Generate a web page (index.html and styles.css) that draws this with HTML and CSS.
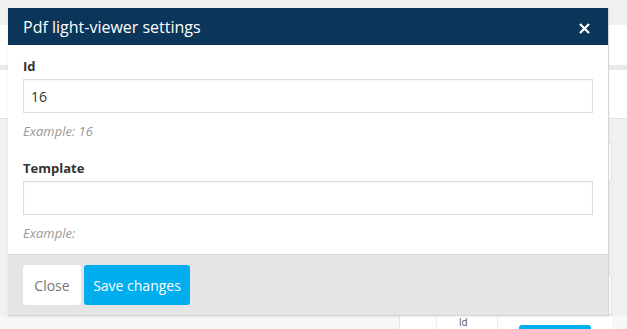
FILE: index.html
```html
<!DOCTYPE html>
<html lang="en">
<head>
  <meta charset="UTF-8">
  <meta name="viewport" content="width=device-width, initial-scale=1.0">
  <title>Pdf light-viewer settings</title>
  <link rel="stylesheet" href="styles.css">
</head>
<body>
  <!-- page behind the dialog -->
  <div class="page">
    <div class="page-top"></div>
    <div class="page-row"></div>
    <div class="page-divider"></div>
    <div class="page-row page-row-tall"></div>
    <div class="page-panel">
      <div class="panel-box panel-box-a"></div>
      <div class="panel-box panel-box-b"></div>
    </div>
    <div class="page-bottom">
      <div class="table-strip">
        <div class="cell cell-a"></div>
        <div class="cell cell-b">ld</div>
        <div class="cell cell-c"><span class="blue-btn"></span></div>
      </div>
    </div>
  </div>

  <!-- settings dialog -->
  <div class="modal">
    <div class="modal-header">
      <h4 class="modal-title">Pdf light-viewer settings</h4>
      <button class="modal-close" type="button" aria-label="Close">
        <svg width="11" height="11" viewBox="0 0 11 11">
          <path d="M1 1 L10 10 M10 1 L1 10" stroke="#fff" stroke-width="2.2" stroke-linecap="butt"/>
        </svg>
      </button>
    </div>
    <div class="modal-body">
      <div class="form-group">
        <label for="pdf-id">Id</label>
        <input type="text" id="pdf-id" value="16">
        <p class="help">Example: 16</p>
      </div>
      <div class="form-group">
        <label for="pdf-template">Template</label>
        <input type="text" id="pdf-template">
        <p class="help">Example:</p>
      </div>
    </div>
    <div class="modal-footer">
      <button class="btn btn-default" type="button">Close</button>
      <button class="btn btn-primary" type="button">Save changes</button>
    </div>
  </div>
</body>
</html>
```

FILE: styles.css
```css
body {
  margin: 0;
  font-family: "Open Sans", "Liberation Sans", Arial, sans-serif;
  background: #f1f1f1;
  color: #333;
}

/* background page */
.page {
  width: 627px;
  height: 329px;
  overflow: hidden;
}
.page-top {
  height: 25px;
  background: #f1f1f1;
}
.page-row {
  height: 40px;
  background: #fff;
}
.page-row-tall {
  height: 48px;
}
.page-divider {
  height: 5px;
  background: #e9e9e9;
}
.page-panel {
  height: 197px;
  background: #f1f1f1;
  border-top: 1px solid #e4e4e4;
  display: flex;
  flex-direction: column;
  align-items: flex-end;
  padding-right: 15px;
}
.panel-box {
  width: 30px;
  background: #fff;
  border: 1px solid #e2e2e2;
}
.panel-box-a {
  margin-top: 24px;
  height: 36px;
}
.panel-box-b {
  margin-top: 94px;
  height: 38px;
}
.page-bottom {
  height: 20px;
  background: #f7f7f7;
  display: flex;
  justify-content: flex-end;
  padding-right: 15px;
}
.table-strip {
  display: flex;
  width: 212px;
  background: #fff;
  border-left: 1px solid #e6e6e6;
}
.cell {
  border-right: 1px solid #ececec;
  font-size: 10px;
  line-height: 11px;
  color: #555;
}
.cell-a {
  width: 36px;
}
.cell-b {
  width: 60px;
  padding-top: 1px;
  text-indent: 22px;
}
.cell-c {
  flex: 1;
  border-right: none;
  padding: 9px 0 0 21px;
}
.blue-btn {
  display: block;
  width: 72px;
  height: 20px;
  background: #00aeef;
  border-radius: 3px;
}

/* dialog */
.modal {
  position: absolute;
  left: 8px;
  top: 8px;
  width: 600px;
  background: #fff;
  border-right: 1px solid #d6d6d6;
  border-bottom: 1px solid #d4d4d4;
  box-shadow: 0 1px 2px rgba(0, 0, 0, 0.08);
}
.modal-header {
  height: 37px;
  background: #0b3559;
  display: flex;
  align-items: center;
  justify-content: space-between;
  padding: 0 18px 0 15px;
}
.modal-title {
  margin: 0;
  font-size: 16px;
  font-weight: 400;
  color: #fff;
}
.modal-close {
  background: none;
  border: none;
  padding: 0;
  display: flex;
  margin-top: 3px;
  cursor: pointer;
}
.modal-body {
  padding: 12px 15px 12px;
}
.form-group {
  margin-bottom: 19px;
}
.form-group:last-child {
  margin-bottom: 0;
}
.form-group label {
  display: block;
  font-size: 13px;
  font-weight: 700;
  color: #333;
  line-height: 18px;
  margin-bottom: 4px;
}
.form-group input {
  display: block;
  box-sizing: border-box;
  width: 100%;
  height: 34px;
  padding: 0 7px;
  font-family: inherit;
  font-size: 14px;
  color: #333;
  background: #fff;
  border: 1px solid #dcdcdc;
  box-shadow: inset 0 1px 2px rgba(0, 0, 0, 0.04);
  outline: none;
}
.help {
  margin: 9px 0 0;
  font-size: 13px;
  line-height: 18px;
  font-style: italic;
  color: #999;
}
.modal-footer {
  background: #e5e5e5;
  border-top: 1px solid #d9d9d9;
  padding: 10px 15px 10px;
  display: flex;
  gap: 3px;
}
.btn {
  height: 40px;
  border: none;
  border-radius: 3px;
  font-family: inherit;
  font-size: 14px;
  cursor: pointer;
}
.btn-default {
  width: 58px;
  background: #fff;
  color: #777;
}
.btn-primary {
  width: 106px;
  background: #00aeef;
  color: #fff;
}
```
